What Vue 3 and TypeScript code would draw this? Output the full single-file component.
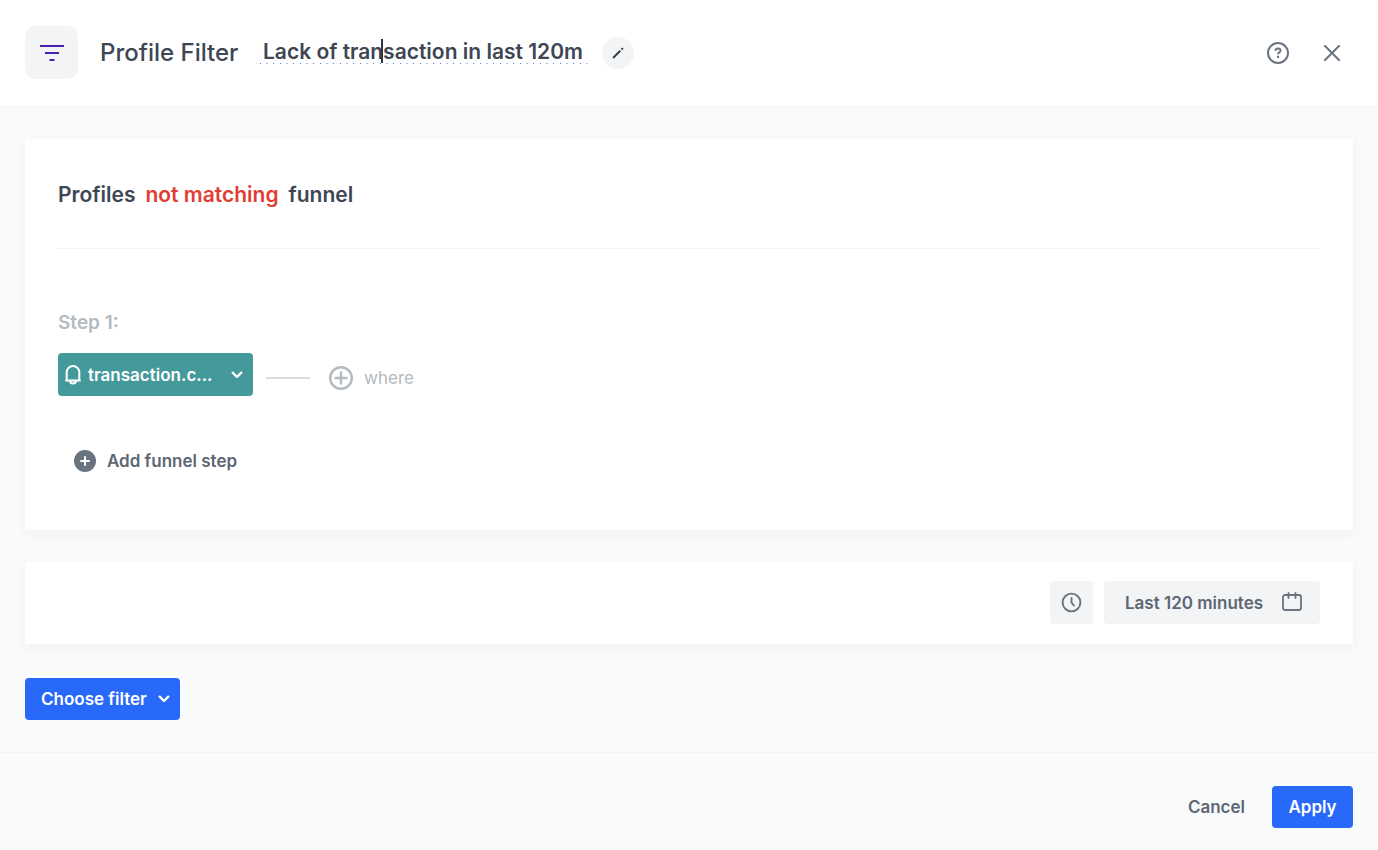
<script setup lang="ts">
import { ref } from 'vue'

const filterName = ref('Lack of transaction in last 120m')
const eventName = ref('transaction.c...')
const dateRange = ref('Last 120 minutes')
</script>

<template>
  <div class="page">
    <header class="header">
      <span class="badge">
        <svg width="24" height="18" viewBox="0 0 24 18" fill="none" stroke="#4a22ad" stroke-width="2" aria-hidden="true">
          <path d="M0 2h24M5 9h14M9.500 16h5" />
        </svg>
      </span>
      <h1 class="title">Profile Filter</h1>
      <div class="name">
        <input v-model="filterName" class="name-input" type="text" aria-label="Filter name" />
        <span class="caret"></span>
      </div>
      <button class="edit" type="button" aria-label="Edit name">
        <svg width="12" height="12" viewBox="0 0 12 12" fill="none" stroke="#36404a" stroke-width="2" aria-hidden="true">
          <path d="M1.300 10.700L8.300 3.700" />
          <path d="M9.500 2.500l1.400-1.400" />
          <path d="M.7 11.300l.3-1.800 1.500 1.500z" fill="#36404a" stroke="none" />
        </svg>
      </button>
      <div class="tools">
        <button class="tool" type="button" aria-label="Help">
          <svg width="22" height="22" viewBox="0 0 22 22" fill="none" stroke="#6a7380" stroke-width="2" aria-hidden="true">
            <circle cx="11" cy="11" r="10" />
            <path d="M8.500 8.800c0-1.500 1.100-2.400 2.500-2.400s2.500.9 2.500 2.200c0 1.200-.8 1.600-1.500 2.100-.7.400-1 .8-1 1.600" />
            <path d="M11 13.800v2.200" />
          </svg>
        </button>
        <button class="tool" type="button" aria-label="Close">
          <svg width="16" height="16" viewBox="0 0 16 16" fill="none" stroke="#6a7380" stroke-width="2" stroke-linecap="round" aria-hidden="true">
            <path d="M.8.800l14.400 14.400M15.200.8.800 15.200" />
          </svg>
        </button>
      </div>
    </header>

    <main class="content">
      <section class="card funnel">
        <h2 class="sentence">
          <span>Profiles</span>
          <button class="negation" type="button">not matching</button>
          <span>funnel</span>
        </h2>
        <p class="step-label">Step 1:</p>
        <div class="step">
          <button class="event" type="button">
            <svg width="16" height="20" viewBox="0 0 16 20" fill="none" stroke="#fff" stroke-width="2" aria-hidden="true">
              <path d="M.3 15.500h15.400M1.700 15.500V7.300a6.300 6.300 0 0 1 12.600 0v8.200" />
              <path d="M5 15.500a3 3 0 0 0 6 0" />
            </svg>
            <span class="event-name">{{ eventName }}</span>
            <svg width="12" height="8" viewBox="0 0 12 8" fill="none" stroke="#fff" stroke-width="2.400" stroke-linecap="round" stroke-linejoin="round" aria-hidden="true">
              <path d="M1.700 1.700L6 6l4.300-4.300" />
            </svg>
          </button>
          <span class="connector"></span>
          <button class="where" type="button">
            <svg width="24" height="24" viewBox="0 0 24 24" fill="none" stroke="#b3bac1" stroke-width="2.400" aria-hidden="true">
              <circle cx="12" cy="12" r="10.800" />
              <path d="M12 6.500v11M6.500 12h11" stroke-linecap="round" />
            </svg>
            where
          </button>
        </div>
        <button class="add" type="button">
          <svg width="22" height="22" viewBox="0 0 22 22" fill="none" aria-hidden="true">
            <circle cx="11" cy="11" r="11" fill="#6a7380" />
            <path d="M11 7v8M7 11h8" stroke="#fff" stroke-width="2" stroke-linecap="round" />
          </svg>
          Add funnel step
        </button>
      </section>

      <section class="card range">
        <button class="soft square" type="button" aria-label="Time of day">
          <svg width="21" height="21" viewBox="0 0 21 21" fill="none" stroke="#6a7380" stroke-width="1.900" stroke-linecap="round" stroke-linejoin="round" aria-hidden="true">
            <circle cx="10.500" cy="10.500" r="8.900" />
            <path d="M10.500 6v4.500l2.400 3" />
          </svg>
        </button>
        <button class="soft date" type="button">
          {{ dateRange }}
          <svg width="20" height="21" viewBox="0 0 20 21" fill="none" stroke="#6a7380" stroke-width="1.800" stroke-linecap="round" aria-hidden="true">
            <rect x="1" y="3" width="18" height="15" rx="2" />
            <path d="M6.500 1v5M13.500 1v5" />
          </svg>
        </button>
      </section>

      <button class="primary choose" type="button">
        Choose filter
        <svg width="12" height="8" viewBox="0 0 12 8" fill="none" stroke="#fff" stroke-width="2.400" stroke-linecap="round" stroke-linejoin="round" aria-hidden="true">
          <path d="M1.700 1.700L6 6l4.300-4.300" />
        </svg>
      </button>
    </main>

    <footer class="footer">
      <button class="cancel" type="button">Cancel</button>
      <button class="primary apply" type="button">Apply</button>
    </footer>
  </div>
</template>

<style>
body {
  margin: 0;
  background: #f9fafc;
}
</style>

<style scoped>
.page {
  display: flex;
  flex-direction: column;
  min-height: 100vh;
  background: #f9fafc;
  color: #3d4653;
  font-family: Inter, "Liberation Sans", sans-serif;
  font-weight: 560;
  font-size: 17px;
}
.page, .page * {
  box-sizing: border-box;
}
button, input {
  margin: 0;
  padding: 0;
  border: 0;
  background: none;
  color: inherit;
  font: inherit;
}
button {
  display: inline-flex;
  align-items: center;
  cursor: pointer;
}
svg {
  flex: none;
  display: block;
}
.header {
  display: flex;
  align-items: center;
  height: 107px;
  padding: 0 25px 1px;
  background: #fff;
  border-bottom: 1px solid #f1f2f4;
}
.badge {
  display: flex;
  align-items: center;
  justify-content: center;
  width: 53px;
  height: 53px;
  border-radius: 10px;
  background: #f3f4f6;
}
.title {
  min-width: 139px;
  margin: 0 0 0 22px;
  font-size: 24px;
  font-weight: 520;
  white-space: nowrap;
}
.name {
  position: relative;
  width: 328px;
  margin: 0 0 2px 21px;
  padding: 0 3px 1px;
  background: repeating-linear-gradient(90deg, #4f7de8 0 1px, transparent 1px 6px, #a9c0f5 6px 8px, transparent 8px 13px, #4f7de8 13px 14px, transparent 14px 20px) left bottom / 100% 1px no-repeat;
}
.name-input {
  display: block;
  width: 100%;
  height: 24px;
  font-size: 21px;
  outline: none;
}
.caret {
  position: absolute;
  left: 121px;
  top: 0;
  width: 2px;
  height: 24px;
  background: #2d3540;
}
.edit {
  justify-content: center;
  width: 32px;
  height: 32px;
  margin-left: 14px;
  border-radius: 50%;
  background: #f3f4f6;
}
.tools {
  display: flex;
  gap: 22px;
  margin-left: auto;
  padding-right: 5px;
}
.tool {
  justify-content: center;
  width: 32px;
  height: 32px;
}
.content {
  display: flex;
  flex: 1;
  flex-direction: column;
  align-items: flex-start;
  padding: 32px 25px;
}
.card {
  width: 100%;
  margin-bottom: 32px;
  background: #fff;
  box-shadow: 0 4px 12px rgba(35, 41, 54, 0.04);
}
.funnel {
  padding: 0 33px 54px;
}
.sentence {
  display: flex;
  align-items: center;
  gap: 10px;
  height: 110px;
  margin: 0;
  padding-top: 2px;
  border-bottom: 1px solid #f2f3f5;
  font-size: 21px;
  font-weight: 560;
}
.negation {
  color: #e23d32;
}
.step-label {
  margin: 62px 0 18px;
  color: #b3bac1;
  font-size: 19px;
  line-height: 24px;
}
.step {
  display: flex;
  align-items: center;
}
.event {
  gap: 7px;
  width: 195px;
  height: 43px;
  padding: 0 10px 0 7px;
  border-radius: 4px;
  background: #449a9a;
  color: #fff;
}
.event-name {
  flex: 1;
  text-align: left;
}
.connector {
  width: 44px;
  height: 2px;
  margin: 6px 19px 0 13px;
  background: #d9dbdd;
}
.where {
  gap: 11px;
  margin-top: 6px;
  color: #b3bac1;
  font-weight: 400;
}
.add {
  gap: 11px;
  height: 22px;
  margin: 54px 0 0 16px;
  color: #5d6673;
}
.range {
  display: flex;
  justify-content: flex-end;
  gap: 11px;
  margin-bottom: 34px;
  padding: 19px 33px 20px;
}
.soft {
  height: 43px;
  border-radius: 4px;
  background: #f3f4f6;
  color: #5d6673;
}
.square {
  justify-content: center;
  width: 43px;
}
.date {
  justify-content: space-between;
  width: 216px;
  padding: 0 18px 0 21px;
}
.primary {
  height: 42px;
  padding: 0 16px;
  border-radius: 4px;
  background: #2969fa;
  color: #fff;
}
.apply {
  justify-content: center;
  min-width: 81px;
}
.choose {
  justify-content: space-between;
  width: 155px;
  padding: 0 10px 0 16px;
}
.footer {
  display: flex;
  align-items: center;
  justify-content: flex-end;
  gap: 27px;
  height: 98px;
  padding: 11px 25px 0;
  border-top: 1px solid #f1f2f4;
}
.cancel {
  color: #5d6673;
}
</style>
